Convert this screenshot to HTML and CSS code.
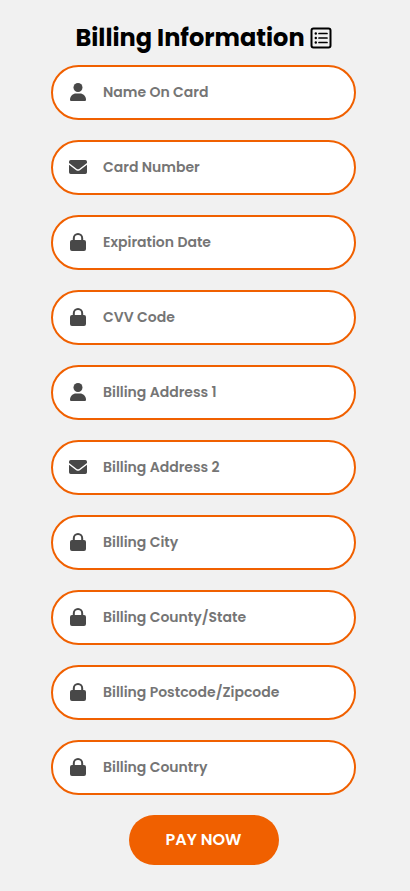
FILE: index.html
```html
<!DOCTYPE html>
<html lang="en">
<head>
<meta charset="utf-8">
<meta name="viewport" content="width=device-width, initial-scale=1">
<title>Billing Information</title>
<link rel="stylesheet" href="styles.css">
</head>
<body>
<svg class="sprite" aria-hidden="true">
  <symbol id="user" viewBox="0 0 18 18"><circle cx="9" cy="4.500" r="4.500"/><path d="M1 16.800C1 13 3.800 10.500 7.200 10.500H10.800C14.200 10.500 17 13 17 16.800Q17 18 15.900 18H2.100Q1 18 1 16.800Z"/></symbol>
  <symbol id="mail" viewBox="0 0 18 18"><path d="M1.700 2H16.300Q18 2 18 3.700V5L10.200 10.900Q9 11.700 7.800 10.900L0 5V3.700Q0 2 1.700 2ZM0 6.800L7.200 12.200Q9 13.300 10.800 12.200L18 6.800V14.300Q18 16 16.300 16H1.700Q0 16 0 14.300Z"/></symbol>
  <symbol id="lock" viewBox="0 0 18 18"><path fill-rule="evenodd" d="M3.800 7V5.200A5.200 5.200 0 0 1 14.200 5.200V7H15Q17 7 17 9V16Q17 18 15 18H3Q1 18 1 16V9Q1 7 3 7ZM5.800 7H12.200V5.200A3.200 3.200 0 0 0 5.800 5.200Z"/></symbol>
</svg>
<main class="billing">
  <h1 class="title">Billing Information
    <svg class="title-icon" viewBox="0 0 22 22" aria-hidden="true"><rect x="1.500" y="1.500" width="19" height="19" rx="2" fill="none" stroke="#000" stroke-width="2"/><path d="M9 6.500H17M9 11H17M9 15.500H17" stroke="#000" stroke-width="1.700" stroke-linecap="round"/><circle cx="5.800" cy="6.500" r="1.200"/><circle cx="5.800" cy="11" r="1.200"/><circle cx="5.800" cy="15.500" r="1.200"/></svg>
  </h1>
  <form class="form">
    <label class="field"><svg class="icon" aria-hidden="true"><use href="#user"/></svg><input type="text" aria-label="Name On Card" placeholder="Name On Card"></label>
    <label class="field"><svg class="icon" aria-hidden="true"><use href="#mail"/></svg><input type="text" aria-label="Card Number" placeholder="Card Number"></label>
    <label class="field"><svg class="icon" aria-hidden="true"><use href="#lock"/></svg><input type="text" aria-label="Expiration Date" placeholder="Expiration Date"></label>
    <label class="field"><svg class="icon" aria-hidden="true"><use href="#lock"/></svg><input type="text" aria-label="CVV Code" placeholder="CVV Code"></label>
    <label class="field"><svg class="icon" aria-hidden="true"><use href="#user"/></svg><input type="text" aria-label="Billing Address 1" placeholder="Billing Address 1"></label>
    <label class="field"><svg class="icon" aria-hidden="true"><use href="#mail"/></svg><input type="text" aria-label="Billing Address 2" placeholder="Billing Address 2"></label>
    <label class="field"><svg class="icon" aria-hidden="true"><use href="#lock"/></svg><input type="text" aria-label="Billing City" placeholder="Billing City"></label>
    <label class="field"><svg class="icon" aria-hidden="true"><use href="#lock"/></svg><input type="text" aria-label="Billing County/State" placeholder="Billing County/State"></label>
    <label class="field"><svg class="icon" aria-hidden="true"><use href="#lock"/></svg><input type="text" aria-label="Billing Postcode/Zipcode" placeholder="Billing Postcode/Zipcode"></label>
    <label class="field"><svg class="icon" aria-hidden="true"><use href="#lock"/></svg><input type="text" aria-label="Billing Country" placeholder="Billing Country"></label>
    <button class="pay" type="submit">PAY NOW</button>
  </form>
</main>
</body>
</html>
```
FILE: styles.css
```css
* {
  box-sizing: border-box;
}

body {
  margin: 0;
  background: #f1f1f1;
  font-family: Poppins, Inter, "Open Sans", sans-serif;
}

.sprite {
  position: absolute;
  width: 0;
  height: 0;
}

.billing {
  padding: 20px 54px 26px 51px;
}

.title {
  display: flex;
  align-items: center;
  justify-content: center;
  gap: 5px;
  margin: 0 0 9px;
  color: #000;
  font-size: 24px;
  font-weight: 700;
  line-height: 36px;
  white-space: nowrap;
}

.title-icon {
  flex: none;
  width: 22px;
  height: 22px;
}

.form {
  display: flex;
  flex-direction: column;
  align-items: center;
  gap: 20px;
}

.field {
  display: flex;
  align-items: center;
  width: 100%;
  max-width: 380px;
  height: 55px;
  padding-bottom: 1px;
  border: 2px solid #f06000;
  border-radius: 55px;
  background: #fff;
}

.icon {
  flex: none;
  width: 50px;
  height: 18px;
  fill: #484848;
}

.field input {
  flex: 1;
  min-width: 0;
  padding: 0;
  border: 0;
  outline: 0;
  background: none;
  color: #333;
  font: 600 14px/20px Poppins, Inter, "Open Sans", sans-serif;
}

.field input::placeholder {
  color: #757575;
}

.pay {
  width: 150px;
  height: 50px;
  border: 0;
  border-radius: 50px;
  background: #f06000;
  color: #fff;
  font: 600 16px/24px Poppins, Inter, "Open Sans", sans-serif;
  cursor: pointer;
}
```
